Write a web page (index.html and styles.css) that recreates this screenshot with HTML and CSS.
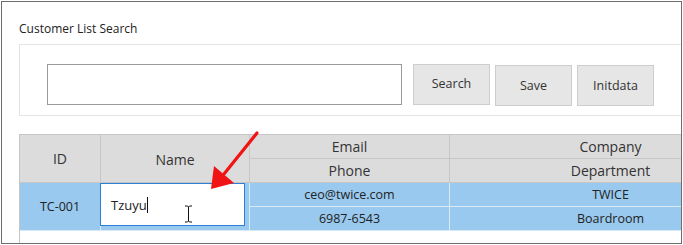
FILE: index.html
```html
<!DOCTYPE html>
<html lang="en">
<head>
    <meta charset="UTF-8">
    <title>Customer List Search</title>
    <link rel="stylesheet" href="styles.css">
</head>
<body>
    <div class="frame">
        <h1 class="title">Customer List Search</h1>

        <!-- search bar -->
        <section class="search">
            <input class="keyword" type="text">
            <button class="btn">Search</button>
            <button class="btn low">Save</button>
            <button class="btn low">Initdata</button>
        </section>

        <!-- grid -->
        <section class="grid">
            <div class="hd id">ID</div>
            <div class="hd name">Name</div>
            <div class="hd">Email</div>
            <div class="hd">Company</div>
            <div class="hd">Phone</div>
            <div class="hd">Department</div>

            <div class="cell id">TC-001</div>
            <div class="cell name"><div class="editor">Tzuyu<i class="caret"></i></div></div>
            <div class="cell">ceo@twice.com</div>
            <div class="cell">TWICE</div>
            <div class="cell">6987-6543</div>
            <div class="cell">Boardroom</div>
        </section>
    </div>

    <!-- annotation overlay -->
    <svg class="arrow" width="683" height="245" viewBox="0 0 683 245">
        <line x1="257" y1="133" x2="224" y2="174" stroke="#f01414" stroke-width="3.2" stroke-linecap="round"/>
        <polygon points="211,189 214,166 234,183" fill="#f01414"/>
    </svg>
    <svg class="ibeam" width="9" height="18" viewBox="0 0 9 18">
        <path d="M1 1h2.5l1 1 1-1H8M4.5 2v14M1 17h2.5l1-1 1 1H8" stroke="#111" stroke-width="1" fill="none"/>
    </svg>
</body>
</html>
```

FILE: styles.css
```css
* {
    box-sizing: border-box;
}

body {
    margin: 0;
    font-family: "Open Sans", "Noto Sans", sans-serif;
    color: #333;
    background: #fff;
}

.frame {
    margin: 1px;
    width: 681px;
    height: 243px;
    border: 1px solid #6e6e6e;
    padding: 0 0 0 17px;
    overflow: hidden;
}

.title {
    margin: 0;
    padding-top: 18px;
    height: 42px;
    font-size: 12px;
    font-weight: normal;
    color: #222;
}

/* search bar */
.search {
    width: 720px;
    height: 72px;
    border: 1px solid #e4e4e4;
    padding: 19px 0 0 27px;
    display: flex;
    align-items: flex-start;
}
.keyword {
    width: 355px;
    height: 41px;
    margin: 0;
    border: 1px solid #9a9a9a;
    background: #fff;
}
.btn {
    height: 41px;
    width: 77px;
    margin: 0 0 0 5px;
    padding: 0;
    border: 1px solid #cdcdcd;
    background: #e6e6e6;
    font-family: inherit;
    font-size: 12.5px;
    color: #333;
}
.btn:first-of-type {
    margin-left: 11px;
    padding-bottom: 2px;
}
.btn.low {
    margin-top: 1px;
}

/* grid */
.grid {
    margin-top: 18px;
    width: 760px;
    height: 120px;
    border-top: 1px solid #c6c6c6;
    border-left: 1px solid #c6c6c6;
    display: grid;
    grid-template-columns: 81px 149px 200px 322px;
    grid-template-rows: 24px 24px 24px 24px;
    align-content: start;
    font-size: 14px;
}
.grid > div {
    display: flex;
    align-items: center;
    justify-content: center;
}
.hd {
    background: #dcdcdc;
    border-right: 1px solid #c6c6c6;
    border-bottom: 1px solid #c6c6c6;
    color: #333;
}
.cell {
    background: #99c9ee;
    border-right: 1px solid #d9eaf7;
    border-bottom: 1px solid #d9eaf7;
    font-size: 12.5px;
    color: #222;
}
.id,
.name {
    grid-row: span 2;
}
.hd.name {
    padding-top: 2px;
}
.cell.name {
    align-items: flex-start;
    justify-content: flex-start;
}
.editor {
    margin-left: -1px;
    width: 145px;
    height: 43px;
    border: 1px solid #2b80d6;
    background: #fff;
    padding: 12px 0 0 10px;
    font-size: 13px;
    color: #222;
    display: flex;
    align-items: flex-start;
}
.caret {
    display: inline-block;
    width: 1px;
    height: 16px;
    margin-top: 1px;
    background: #111;
}

/* overlays */
.arrow {
    position: absolute;
    left: 0;
    top: 0;
}
.ibeam {
    position: absolute;
    left: 184px;
    top: 205px;
}
```
